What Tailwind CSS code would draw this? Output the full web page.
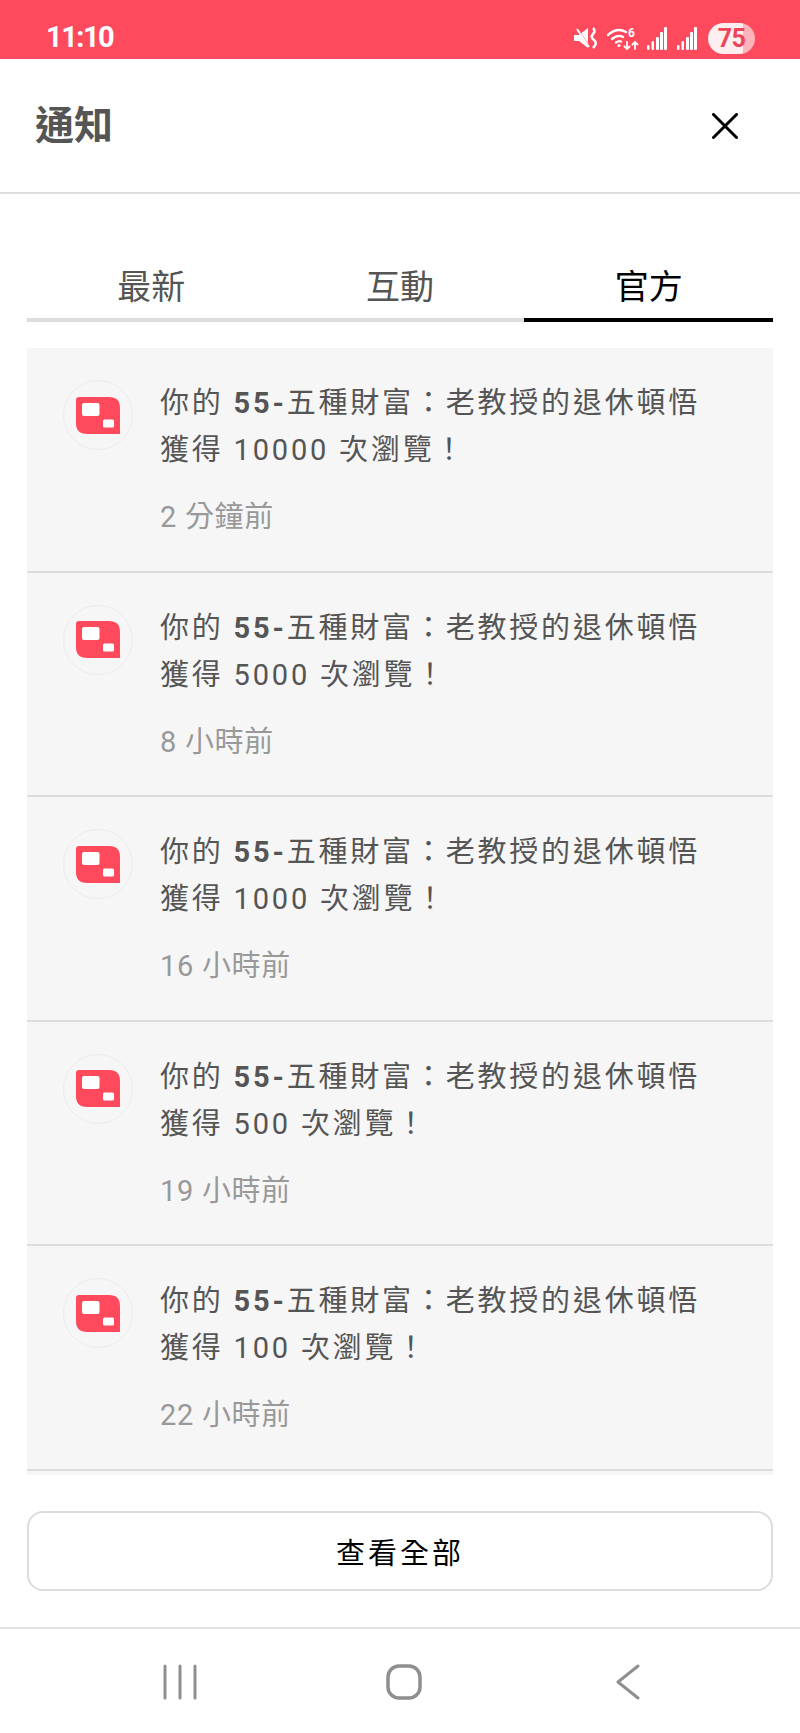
<!DOCTYPE html>
<html lang="zh-Hant">
<head>
    <meta charset="UTF-8">
    <title>通知</title>
    <script src="https://cdn.jsdelivr.net/npm/@tailwindcss/browser@4"></script>
</head>
<body class="bg-white font-['Roboto','Noto_Sans_CJK_TC',sans-serif]">
<div class="flex flex-col h-[1733px] w-[800px] overflow-hidden">
    <!-- Status bar -->
    <div class="h-[59px] bg-[#ff4a5e] flex items-center pl-[46px] pr-[45px] text-white">
        <span class="text-[29px] font-bold tracking-[-1.5px] mt-[17px]">11:10</span>
        <div class="ml-auto flex items-center mt-[17px]">
            <svg class="w-[23px] h-[24px]" viewBox="0 0 23 24" fill="none">
                <path d="M0 9h5l9-7v20l-9-7H0z" fill="#fff"/>
                <path d="M2 1l14 21" stroke="#ff4a5e" stroke-width="2"/>
                <path d="M3 3l12 18" stroke="#fff" stroke-width="2"/>
                <path d="M19 2q3 3 0 6t1 6-1 8" stroke="#fff" stroke-width="2.500"/>
            </svg>
            <svg class="w-[32px] h-[24px] ml-[10px]" viewBox="0 0 32 24" fill="none" stroke="#fff" stroke-width="2.400" stroke-linecap="round">
                <path d="M1 9q9-8 18-3"/>
                <path d="M5 13q6-5 11-2"/>
                <path d="M9 16.500q3-2 5-1"/>
                <circle cx="12" cy="19.500" r="1.500" fill="#fff" stroke="none"/>
                <path d="M20 16v7M17.500 20.500l2.500 2.500 2.500-2.500M28 23v-7M25.500 18.500l2.500-2.500 2.500 2.500" stroke-width="1.800"/>
                <text x="21" y="11" font-size="12" font-weight="700" fill="#fff" stroke="none">6</text>
            </svg>
            <svg class="w-[20px] h-[23px] ml-[8px]" viewBox="0 0 20 23" fill="#fff">
                <rect x="0" y="18" width="2.500" height="5" rx="1"/>
                <rect x="4.500" y="14" width="2.500" height="9" rx="1"/>
                <rect x="9" y="10" width="3" height="13" rx="1"/>
                <rect x="13" y="5" width="3" height="18" rx="1"/>
                <rect x="17" y="0" width="3" height="23" rx="1"/>
            </svg>
            <svg class="w-[20px] h-[23px] ml-[10px]" viewBox="0 0 20 23" fill="#fff">
                <rect x="0" y="18" width="2.500" height="5" rx="1"/>
                <rect x="4.500" y="14" width="2.500" height="9" rx="1"/>
                <rect x="9" y="10" width="3" height="13" rx="1"/>
                <rect x="13" y="5" width="3" height="18" rx="1"/>
                <rect x="17" y="0" width="3" height="23" rx="1"/>
            </svg>
            <div class="ml-[11px] w-[47px] h-[31px] rounded-full bg-[linear-gradient(90deg,#ffeef0_75%,#ffb3bb_75%)] flex items-center justify-center text-[#ee4458] text-[25px] font-bold tracking-[-0.5px] leading-none">75</div>
        </div>
    </div>

    <!-- Header -->
    <div class="h-[135px] border-b-2 border-[#dedede] flex items-center justify-between pl-[35px] pr-[62px]">
        <h1 class="text-[39px] font-bold text-[#555] leading-none mt-[2px]">通知</h1>
        <svg class="w-[26px] h-[26px]" viewBox="0 0 26 26" fill="none" stroke="#000" stroke-width="3" stroke-linecap="round">
            <path d="M1.500 1.500l23 23M24.500 1.500l-23 23"/>
        </svg>
    </div>

    <!-- Tabs -->
    <div class="mx-[27px] mt-[69px] grid grid-cols-3 text-[34px] leading-[48px] text-center">
        <div class="pb-[7px] border-b-4 border-[#dcdcdc] text-[#555]">最新</div>
        <div class="pb-[7px] border-b-4 border-[#dcdcdc] text-[#555]">互動</div>
        <div class="pb-[7px] border-b-4 border-black text-black">官方</div>
    </div>

    <!-- Notification list -->
    <div id="list" class="mx-[27px] mt-[26px] h-[1127px] overflow-hidden bg-[#f6f6f6]"></div>

    <!-- View all -->
    <div class="px-[27px] pt-[36px] pb-[36px]">
        <button class="w-full h-[80px] pt-[7px] rounded-[16px] border-2 border-[#dcdcdc] bg-white text-[29px] tracking-[3px] text-black">查看全部</button>
    </div>

    <!-- Android nav -->
    <div class="flex-1 border-t-2 border-[#e4e4e4] pl-[68px] pt-[2px] w-full">
        <div class="w-[672px] h-full grid grid-cols-3 items-center justify-items-center text-[#8f8f8f]">
            <svg class="w-[34px] h-[36px]" viewBox="0 0 34 36" fill="none" stroke="currentColor" stroke-width="3" stroke-linecap="round">
                <path d="M2 2v32M17 2v32M32 2v32"/>
            </svg>
            <svg class="w-[36px] h-[36px]" viewBox="0 0 36 36" fill="none" stroke="currentColor" stroke-width="3.500">
                <rect x="2" y="2" width="32" height="32" rx="11"/>
            </svg>
            <svg class="w-[24px] h-[36px]" viewBox="0 0 24 36" fill="none" stroke="currentColor" stroke-width="3" stroke-linecap="round" stroke-linejoin="round">
                <path d="M22 2L2 18l20 16"/>
            </svg>
        </div>
    </div>
</div>

<script>
    // Notification rows
    const rows = [
        ['10000', '2 分鐘前'],
        ['5000', '8 小時前'],
        ['1000', '16 小時前'],
        ['500', '19 小時前'],
        ['100', '22 小時前'],
    ];
    const logo = `
        <div class="w-[70px] h-[70px] shrink-0 rounded-full border border-[#ececec] flex items-center justify-center">
            <svg class="w-[44px] h-[37px]" viewBox="0 0 44 37">
                <path d="M3 0H33Q44 0 44 11V37H11Q0 37 0 26V3Q0 0 3 0Z" fill="#ff4a5e"/>
                <rect x="6" y="6" width="17.500" height="13" rx="2" fill="#fff"/>
                <rect x="27" y="22.500" width="11" height="8" rx="1.500" fill="#fff"/>
            </svg>
        </div>`;
    document.getElementById('list').innerHTML = rows.map(([views, time]) => `
        <div class="h-[224.5px] border-b-2 border-[#dcdcdc] flex pl-[36px] pt-[32px]">
            ${logo}
            <div class="ml-[27px]">
                <p class="text-[29px] leading-[47px] tracking-[2.8px] text-[#555] whitespace-nowrap">你的 <b class="font-bold">55-</b>五種財富：老教授的退休頓悟<br>獲得 ${views} 次瀏覽！</p>
                <p class="mt-[23px] text-[29px] leading-[40px] tracking-[0.7px] text-[#999]">${time}</p>
            </div>
        </div>
    `).join('');
</script>
</body>
</html>
